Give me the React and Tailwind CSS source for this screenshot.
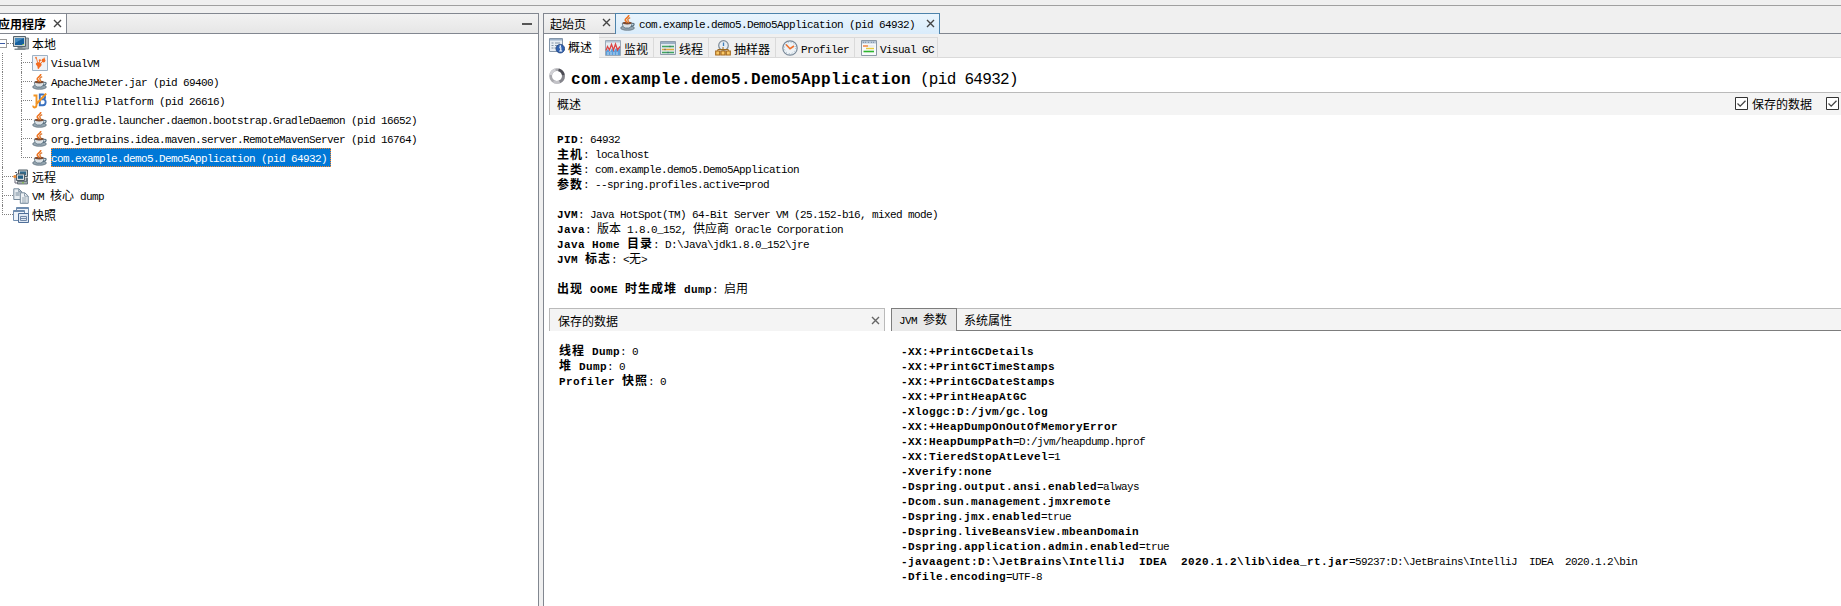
import React from "react";

const CJK = /([\u3000-\u9fff]+)/;

/* Latin runs sit on a 6px cell (7px bold), CJK runs on a 12px cell (13px bold). */
function T({ children, b = false, tight = false, className = "" }) {
  const parts = String(children).split(CJK).filter(Boolean);
  return (
    <span className={`whitespace-pre ${className}`}>
      {parts.map((p, i) => {
        const cjk = CJK.test(p);
        const cls = cjk
          ? b
            ? `font-['Noto_Sans_CJK_SC',sans-serif] text-[12px] font-bold ${tight ? "tracking-normal" : "tracking-[1px]"}`
            : "font-['Noto_Sans_CJK_SC',sans-serif] text-[12px] tracking-normal"
          : b
            ? "font-['Liberation_Mono',monospace] text-[11px] font-bold tracking-[0.4px]"
            : "font-['Liberation_Mono',monospace] text-[11px] tracking-[-0.6px]";
        return (
          <span key={i} className={cls}>
            {p}
          </span>
        );
      })}
    </span>
  );
}

function Svg({ children, className = "" }) {
  return (
    <svg viewBox="0 0 16 16" className={`block size-4 shrink-0 ${className}`}>
      {children}
    </svg>
  );
}

const JavaIcon = (p) => (
  <Svg {...p}>
    <ellipse cx="7.500" cy="13" rx="6.900" ry="2.300" fill="#93a3ae" stroke="#5d6f7b" strokeWidth=".7" />
    <path d="M2.300 8h9.700c0 2.800-1.500 5-3.200 5H5.500C3.700 13 2.300 10.800 2.300 8z" fill="#dbe2e6" stroke="#587080" strokeWidth=".8" />
    <path d="M11.800 8.500c3.200-1 3.400 2.300-1.200 3.200" fill="none" stroke="#587080" strokeWidth="1.100" />
    <ellipse cx="7.200" cy="8.100" rx="4.500" ry="1.300" fill="#7b4c34" />
    <path d="M8.500 0c1.200 2.200-4 3.300-3.200 5.200.4 1 1.500 1.400 1.500 2.600" fill="none" stroke="#ef7420" strokeWidth="1.700" />
    <path d="M10.200 2.700c-2.700 1.100-2.900 2-2 3 .6.700.5 1.400 0 2.100" fill="none" stroke="#e0813c" strokeWidth="1.400" />
  </Svg>
);
const ComputerIcon = () => (
  <Svg>
    <path d="M6 2h9.500v11H6z" fill="#aab2b6" stroke="#69747b" strokeWidth=".8" />
    <path d="M.5.500h12v10H.5z" fill="#c8d0d4" stroke="#56646d" />
    <path d="M2 2h9v7H2z" fill="#15609f" />
    <path d="M2 2h9L2 7z" fill="#4489bd" />
    <path d="M4.500 11h5v1.500h-5zM1.500 12.500h11V14h-11z" fill="#7e898f" />
    <path d="M9.500 8h1.500v1H9.500z" fill="#a6df4b" />
  </Svg>
);
const VisualVmIcon = () => (
  <Svg>
    <path d="M.5.500h15v15H.5z" fill="#f0f3f7" stroke="#9eb2c6" />
    <path d="M6 8.500L4.300 3M8.500 8.500L11.500 5.500M7 8l.8-2.500" stroke="#f58240" strokeWidth="1" />
    <path d="M4 8.200c1.500-1.500 5.600-1 5.600 1.300 0 1.700-1.200 2-1.800 2.700-.7.800-.8 1.800-1.600 1.700-1-.2-.3-1.700-.9-2.700C4.700 10.200 3.300 9.300 4 8.200z" fill="#f36b21" />
    <circle cx="4" cy="2.800" r="1" fill="#f58240" />
    <circle cx="11.500" cy="5.500" r="1.900" fill="#f36b21" />
    <circle cx="12.300" cy="3.300" r=".8" fill="#f58240" />
    <circle cx="7.800" cy="5.300" r="1.100" fill="#f36b21" />
  </Svg>
);
const IntellijIcon = () => (
  <Svg>
    <path d="M7.800 1.500h3c3 0 2.800 4.800.2 4.800H8.500h3c3 0 2.800 6-.5 6H7.800z" fill="none" stroke="#3a71c0" strokeWidth="1.900" />
    <path d="M1.500 2.500h3v9.300c0 3.700-3.500 3.200-3.300.8M14.200.500L4 11.500" fill="none" stroke="#f29423" strokeWidth="1.900" />
  </Svg>
);
const RemoteIcon = () => (
  <Svg>
    <path d="M5.500 1h9v6.500h-9z" fill="#c1c8cc" stroke="#515e66" />
    <path d="M7 2.500h6v3.500H7z" fill="#2f698c" />
    <path d="M3.500 5h8v6.500h-8z" fill="#d6dbde" stroke="#515e66" />
    <path d="M5 6.500h5v3.300H5z" fill="#235f86" />
    <path d="M4.500 12.500h10v2.500h-10z" fill="#a4adb1" stroke="#515e66" strokeWidth=".8" />
    <path d="M12.500 8.500h2.500v4h-2.500z" fill="#6a767e" />
    <path d="M2 6v8h3M2 3.500h2" fill="none" stroke="#667" />
    <circle cx="1.800" cy="7.500" r="1.600" fill="#f08b32" />
    <path d="M9 13.200h2v1H9z" fill="#83c63d" />
  </Svg>
);
const DumpIcon = () => (
  <Svg>
    <path d="M.8.800h5l3 3v7.700h-8z" fill="#e8edf1" stroke="#75899a" />
    <path d="M5.800.800v3h3M2.500 5h4M2.500 7h4" fill="none" stroke="#75899a" />
    <path d="M7.300 4.800h4.500l3.400 3.200v7.300H7.300z" fill="#eef2f5" stroke="#75899a" />
    <path d="M11.500 5v3.200H15M9 10h4.500M9 12h4.500M9 14h4.500" fill="none" stroke="#8798a7" strokeWidth=".9" />
  </Svg>
);
const SnapshotIcon = () => (
  <Svg>
    <path d="M3.500.500h12v10h-12z" fill="#eef4fb" stroke="#6f8caf" />
    <path d="M3.500.500h12V2h-12z" fill="#6f8caf" />
    <path d="M.5 3.500h11v10H.5z" fill="#eef4fb" stroke="#6f8caf" />
    <path d="M.5 3.500h11V5H.5z" fill="#6f8caf" />
    <path d="M5.500 6.500h10v9h-10z" fill="#dfe8f3" stroke="#4f6f99" />
    <path d="M7.500 9.500h6v4h-6zM7.500 11.500h6" fill="none" stroke="#7188a8" />
  </Svg>
);
const OverviewIcon = () => (
  <Svg>
    <path d="M.5.500h13v13H.5z" fill="#e8eef4" stroke="#8496aa" />
    <path d="M1 1h12v1.500H1z" fill="#9cb1c8" />
    <path d="M2.500 5h2m1.500 0h5M2.500 7.500h2m1.500 0h3M2.500 10h2m1 0h2" stroke="#8293a6" />
    <circle cx="11.300" cy="10.700" r="4.300" fill="#2f61b0" stroke="#1e3f7a" strokeWidth=".8" />
    <path d="M10.200 9.800h1.600V13M10.200 13h3" fill="none" stroke="#fff" strokeWidth="1.100" />
    <circle cx="11.300" cy="8.100" r=".9" fill="#fff" />
  </Svg>
);
const MonitorIcon = () => (
  <Svg>
    <path d="M.5.500h15v15H.5z" fill="#e6ecf2" stroke="#9aa9b8" />
    <path d="M1 1h14v1.500H1z" fill="#b4c4d4" />
    <path d="M1 11l2-2 2 3 2-4 2 3 2-3 2 2 2-2v7H1z" fill="#5c9edb" />
    <path d="M3 15v-3M6 15v-3M9 15v-3M12 15v-3" stroke="#d6e8f7" strokeWidth=".8" />
    <path d="M1 10.500l1.500-4L4.500 10l2-5.500L8.500 10l2-6 2 6L15 6.500" fill="none" stroke="#dc4444" strokeWidth="1.300" />
  </Svg>
);
const ThreadsIcon = () => (
  <Svg>
    <path d="M.5 1.500h15v13H.5z" fill="#e4eaf0" stroke="#8e9dac" />
    <path d="M1 2h14v2H1z" fill="#9bafc4" />
    <path d="M2 6.500h12M2 12.500h12" stroke="#3fa35e" strokeWidth="1.500" />
    <path d="M2 9.500h12" stroke="#e0a83c" strokeWidth="1.500" />
    <path d="M5 8.800v1.400M10 5.800v1.400M8 11.800v1.400" stroke="#385a7a" />
  </Svg>
);
const SamplerIcon = () => (
  <Svg>
    <circle cx="8.500" cy="5.500" r="4.800" fill="#e7edf2" stroke="#7d8b98" strokeWidth="1.200" />
    <path d="M8.500 2.500V6" fill="none" stroke="#3a7cb8" strokeWidth="1.300" />
    <path d="M8 7v3.500M2.800 11V9.500h10.500V11" fill="none" stroke="#9c6a20" />
    <path d="M.7 11h4v4h-4zM6 11h4v4H6zM11.300 11h4v4h-4z" fill="#f9c766" stroke="#a5681a" strokeWidth="1.100" />
  </Svg>
);
const ProfilerIcon = () => (
  <Svg>
    <circle cx="8" cy="8" r="7.200" fill="#eef3f7" stroke="#788898" strokeWidth="1.200" />
    <circle cx="8" cy="8" r="5.600" fill="none" stroke="#9fb4c6" strokeWidth="1" strokeDasharray="1 1.930" />
    <path d="M4 4.500l4 4.200L12 6" fill="none" stroke="#f0702c" strokeWidth="1.600" />
  </Svg>
);
const GcIcon = () => (
  <Svg>
    <path d="M.5.500h15v15H.5z" fill="#f8fafb" stroke="#8b98a5" />
    <path d="M1 1h14v2.500H1z" fill="#b8c6d5" />
    <path d="M2 2.300h4m1 0h2m1 0h4" stroke="#798ea5" strokeDasharray="1 1" />
    <path d="M2 6h5" stroke="#ef7a30" strokeWidth="1.400" />
    <path d="M7 6h6.500" stroke="#d9dfe4" strokeWidth="1" />
    <path d="M5 8.500h8" stroke="#eacb3a" strokeWidth="1.400" />
    <path d="M2.500 11.500H13" stroke="#2db52d" strokeWidth="1.600" />
  </Svg>
);
const Spinner = () => (
  <Svg>
    <circle cx="8" cy="8" r="6.400" fill="none" stroke="#a9a9ae" strokeWidth="2.800" />
    <path d="M1.800 7A6.400 6.400 0 0 1 6.500 1.800" fill="none" stroke="#d0d0d4" strokeWidth="2.800" />
    <path d="M9.500 1.800A6.400 6.400 0 0 1 14.400 7.500" fill="none" stroke="#4c4c54" strokeWidth="2.800" />
    <path d="M14.400 7.500A6.400 6.400 0 0 1 10.500 13.900" fill="none" stroke="#85858c" strokeWidth="2.800" />
    <path d="M10.500 13.900A6.400 6.400 0 0 1 4.500 13.300" fill="none" stroke="#c2c2c7" strokeWidth="2.800" />
  </Svg>
);
const Close = ({ className = "text-[#444]" }) => (
  <svg viewBox="0 0 9 9" className={`block size-[9px] shrink-0 ${className}`}>
    <path d="M1 1l7 7M8 1l-7 7" stroke="currentColor" strokeWidth="1.400" />
  </svg>
);
const Check = () => (
  <svg viewBox="0 0 13 13" className="block size-[13px] shrink-0">
    <path d="M.5.500h12v12H.5z" fill="#fff" stroke="#333" />
    <path d="M2.500 6.500l2.700 2.700 5.300-5.400" fill="none" stroke="#444" strokeWidth="1.300" />
  </svg>
);

function Leaf({ icon, label, selected, last }) {
  return (
    <div className="flex h-[19px] items-center">
      <div className="ml-[2px] flex h-full w-[19px] border-l border-dotted border-[#808080]" />
      <div className="flex h-full w-[11px] flex-col">
        <div className="h-[10px] border-b border-l border-dotted border-[#808080]" />
        <div className={last ? "" : "flex-1 border-l border-dotted border-[#808080]"} />
      </div>
      {icon}
      <div
        className={
          selected
            ? "ml-[3px] flex h-[19px] w-[280px] items-center bg-[#0078d7] text-white outline-1 -outline-offset-1 outline-dotted outline-[#ff8728]"
            : "ml-[3px] flex h-[19px] items-center"
        }
      >
        <T>{label}</T>
      </div>
    </div>
  );
}

function Branch({ icon, label, last, root }) {
  return (
    <div className="flex h-[19px] items-center">
      {root ? (
        <div className="flex w-[13px] items-center">
          <div className="flex h-[9px] w-[7px] items-center border border-l-0 border-[#9a9a9a] bg-white">
            <div className="h-px w-[5px] bg-[#3b5aa5]" />
          </div>
          <div className="h-px flex-1 border-b border-dotted border-[#808080]" />
        </div>
      ) : (
        <div className="ml-[2px] flex h-full w-[11px] flex-col">
          <div className="h-[10px] border-b border-l border-dotted border-[#808080]" />
          <div className={last ? "" : "flex-1 border-l border-dotted border-[#808080]"} />
        </div>
      )}
      {icon}
      <div className="ml-[3px] flex items-center">
        <T>{label}</T>
      </div>
    </div>
  );
}

function SubTab({ icon, label, width }) {
  return (
    <div className={`mt-[3px] flex h-[20px] items-center gap-[4px] border-t border-r border-[#dadada] pl-[6px] ${width}`}>
      {icon}
      <T className="-ml-px translate-y-px">{label}</T>
    </div>
  );
}

const Row = ({ k, v = "", colon = true }) => (
  <div className="flex h-[15px] items-center">
    <T b>{k}</T>
    <T>{(colon && k ? ": " : "") + v}</T>
  </div>
);

const overview = [
  ["PID", "64932"],
  ["主机", "localhost"],
  ["主类", "com.example.demo5.Demo5Application"],
  ["参数", "--spring.profiles.active=prod"],
  ["", ""],
  ["JVM", "Java HotSpot(TM) 64-Bit Server VM (25.152-b16, mixed mode)"],
  ["Java", "版本 1.8.0_152, 供应商 Oracle Corporation"],
  ["Java Home 目录", "D:\\Java\\jdk1.8.0_152\\jre"],
  ["JVM 标志", "<无>"],
  ["", ""],
  ["出现 OOME 时生成堆 dump", "启用"],
];

const saved = [
  ["线程 Dump", "0"],
  ["堆 Dump", "0"],
  ["Profiler 快照", "0"],
];

const args = [
  ["-XX:+PrintGCDetails"],
  ["-XX:+PrintGCTimeStamps"],
  ["-XX:+PrintGCDateStamps"],
  ["-XX:+PrintHeapAtGC"],
  ["-Xloggc:D:/jvm/gc.log"],
  ["-XX:+HeapDumpOnOutOfMemoryError"],
  ["-XX:HeapDumpPath", "=D:/jvm/heapdump.hprof"],
  ["-XX:TieredStopAtLevel", "=1"],
  ["-Xverify:none"],
  ["-Dspring.output.ansi.enabled", "=always"],
  ["-Dcom.sun.management.jmxremote"],
  ["-Dspring.jmx.enabled", "=true"],
  ["-Dspring.liveBeansView.mbeanDomain"],
  ["-Dspring.application.admin.enabled", "=true"],
  ["-javaagent:D:\\JetBrains\\IntelliJ  IDEA  2020.1.2\\lib\\idea_rt.jar", "=59237:D:\\JetBrains\\IntelliJ  IDEA  2020.1.2\\bin"],
  ["-Dfile.encoding", "=UTF-8"],
];

function Sidebar() {
  return (
    <aside className="flex w-[539px] shrink-0 flex-col border-t border-r border-[#828790] bg-white">
      <div className="flex h-[20px] shrink-0 border-b border-[#828790] bg-linear-to-b from-[#f2f2f2] to-[#e6e6e6]">
        <div className="flex w-[67px] items-center border-r border-[#828790] bg-white">
          <T b tight className="-ml-[2px]">应用程序</T>
          <Close className="ml-[7px] text-[#444]" />
        </div>
        <div className="flex flex-1 items-center justify-end pr-[6px]">
          <div className="h-[2px] w-[10px] bg-[#555]" />
        </div>
      </div>
      <div className="flex flex-col">
        <Branch root icon={<ComputerIcon />} label="本地" />
        <Leaf icon={<VisualVmIcon />} label="VisualVM" />
        <Leaf icon={<JavaIcon />} label="ApacheJMeter.jar (pid 69400)" />
        <Leaf icon={<IntellijIcon />} label="IntelliJ Platform (pid 26616)" />
        <Leaf icon={<JavaIcon />} label="org.gradle.launcher.daemon.bootstrap.GradleDaemon (pid 16652)" />
        <Leaf icon={<JavaIcon />} label="org.jetbrains.idea.maven.server.RemoteMavenServer (pid 16764)" />
        <Leaf icon={<JavaIcon />} label="com.example.demo5.Demo5Application (pid 64932)" selected last />
        <Branch icon={<RemoteIcon />} label="远程" />
        <Branch icon={<DumpIcon />} label="VM 核心 dump" />
        <Branch icon={<SnapshotIcon />} label="快照" last />
      </div>
    </aside>
  );
}

function DocumentTabs() {
  return (
    <div className="flex h-[21px] shrink-0">
      <div className="flex w-[71px] items-center justify-between border-t border-b border-[#828790] bg-linear-to-b from-[#f4f4f4] to-[#e8e8e8] pr-[4px] pl-[6px]">
        <T>起始页</T>
        <Close className="-translate-y-px text-[#444]" />
      </div>
      <div className="flex w-[325px] items-center border-t border-r border-l border-[#4d83ab] bg-linear-to-b from-[#eaf5fd] to-[#d9ecfb] pl-[4px]">
        <JavaIcon className="-translate-y-px" />
        <T className="ml-[3px]">com.example.demo5.Demo5Application (pid 64932)</T>
        <Close className="ml-[11px] -translate-y-px text-[#444]" />
      </div>
      <div className="flex-1 border-b border-[#828790] bg-[#f0f0f0]" />
    </div>
  );
}

function ViewTabs() {
  return (
    <div className="flex h-[24px] shrink-0 bg-[#f0f0f0]">
      <div className="flex w-[55px] items-center gap-[3px] bg-white pl-[5px]">
        <OverviewIcon />
        <T>概述</T>
      </div>
      <div className="flex flex-1 border-b border-[#dadada]">
        <SubTab icon={<MonitorIcon />} label="监视" width="w-[55px]" />
        <SubTab icon={<ThreadsIcon />} label="线程" width="w-[55px]" />
        <SubTab icon={<SamplerIcon />} label="抽样器" width="w-[67px]" />
        <SubTab icon={<ProfilerIcon />} label="Profiler" width="w-[79px]" />
        <SubTab icon={<GcIcon />} label="Visual GC" width="w-[83px]" />
      </div>
    </div>
  );
}

export default function App() {
  return (
    <div className="flex h-[606px] w-[1841px] flex-col overflow-hidden bg-[#f0f0f0] leading-[15px] text-black">
      <div className="h-[6px] shrink-0 border-b border-[#a0a0a0]" />
      <div className="flex min-h-0 flex-1 gap-[4px] pt-[7px]">
        <Sidebar />
        <main className="flex min-w-0 flex-1 flex-col border-l border-[#828790] bg-white">
          <DocumentTabs />
          <ViewTabs />
          <div className="flex h-[34px] shrink-0 pl-[5px]">
            <div className="mt-[10px]">
              <Spinner />
            </div>
            <h1 className="mt-[11px] ml-[6px] flex font-['Liberation_Mono',monospace] text-[16px] leading-[22px] whitespace-pre">
              <span className="font-bold tracking-[0.4px]">com.example.demo5.Demo5Application</span>
              <span className="tracking-[-0.7px]"> (pid 64932)</span>
            </h1>
          </div>
          <div className="ml-[5px] flex h-[23px] shrink-0 items-center border-t border-l border-[#bababa] bg-[#f4f4f4] pr-[2px] pb-px pl-[7px]">
            <T>概述</T>
            <div className="ml-auto flex items-center">
              <Check />
              <T className="ml-[4px]">保存的数据</T>
              <div className="ml-[14px]">
                <Check />
              </div>
            </div>
          </div>
          <div className="flex h-[193px] shrink-0 flex-col pt-[16px] pl-[13px]">
            {overview.map(([k, v], i) => (
              <Row key={i} k={k} v={v} />
            ))}
          </div>
          <div className="flex flex-1 gap-[6px] pl-[5px]">
            <section className="flex w-[336px] shrink-0 flex-col">
              <div className="flex h-[23px] items-center justify-between border-x border-t border-[#bababa] bg-[#f4f4f4] pr-[4px] pl-[8px]">
                <T>保存的数据</T>
                <Close className="text-[#666]" />
              </div>
              <div className="flex flex-col pt-[12px] pl-[10px]">
                {saved.map(([k, v]) => (
                  <Row key={k} k={k} v={v} />
                ))}
              </div>
            </section>
            <section className="flex min-w-0 flex-1 flex-col">
              <div className="flex h-[23px] shrink-0">
                <div className="flex w-[66px] items-center border-x border-t border-[#7d7d7d] bg-[#e9e9e9] pl-[7px]">
                  <T>JVM 参数</T>
                </div>
                <div className="flex flex-1 items-center border-t border-b border-t-[#bababa] border-b-[#7d7d7d] bg-[#f4f4f4] pl-[7px]">
                  <T>系统属性</T>
                </div>
              </div>
              <div className="flex flex-col pt-[12px] pl-[10px]">
                {args.map(([k, v]) => (
                  <Row key={k} k={k} v={v} colon={false} />
                ))}
              </div>
            </section>
          </div>
        </main>
      </div>
    </div>
  );
}
